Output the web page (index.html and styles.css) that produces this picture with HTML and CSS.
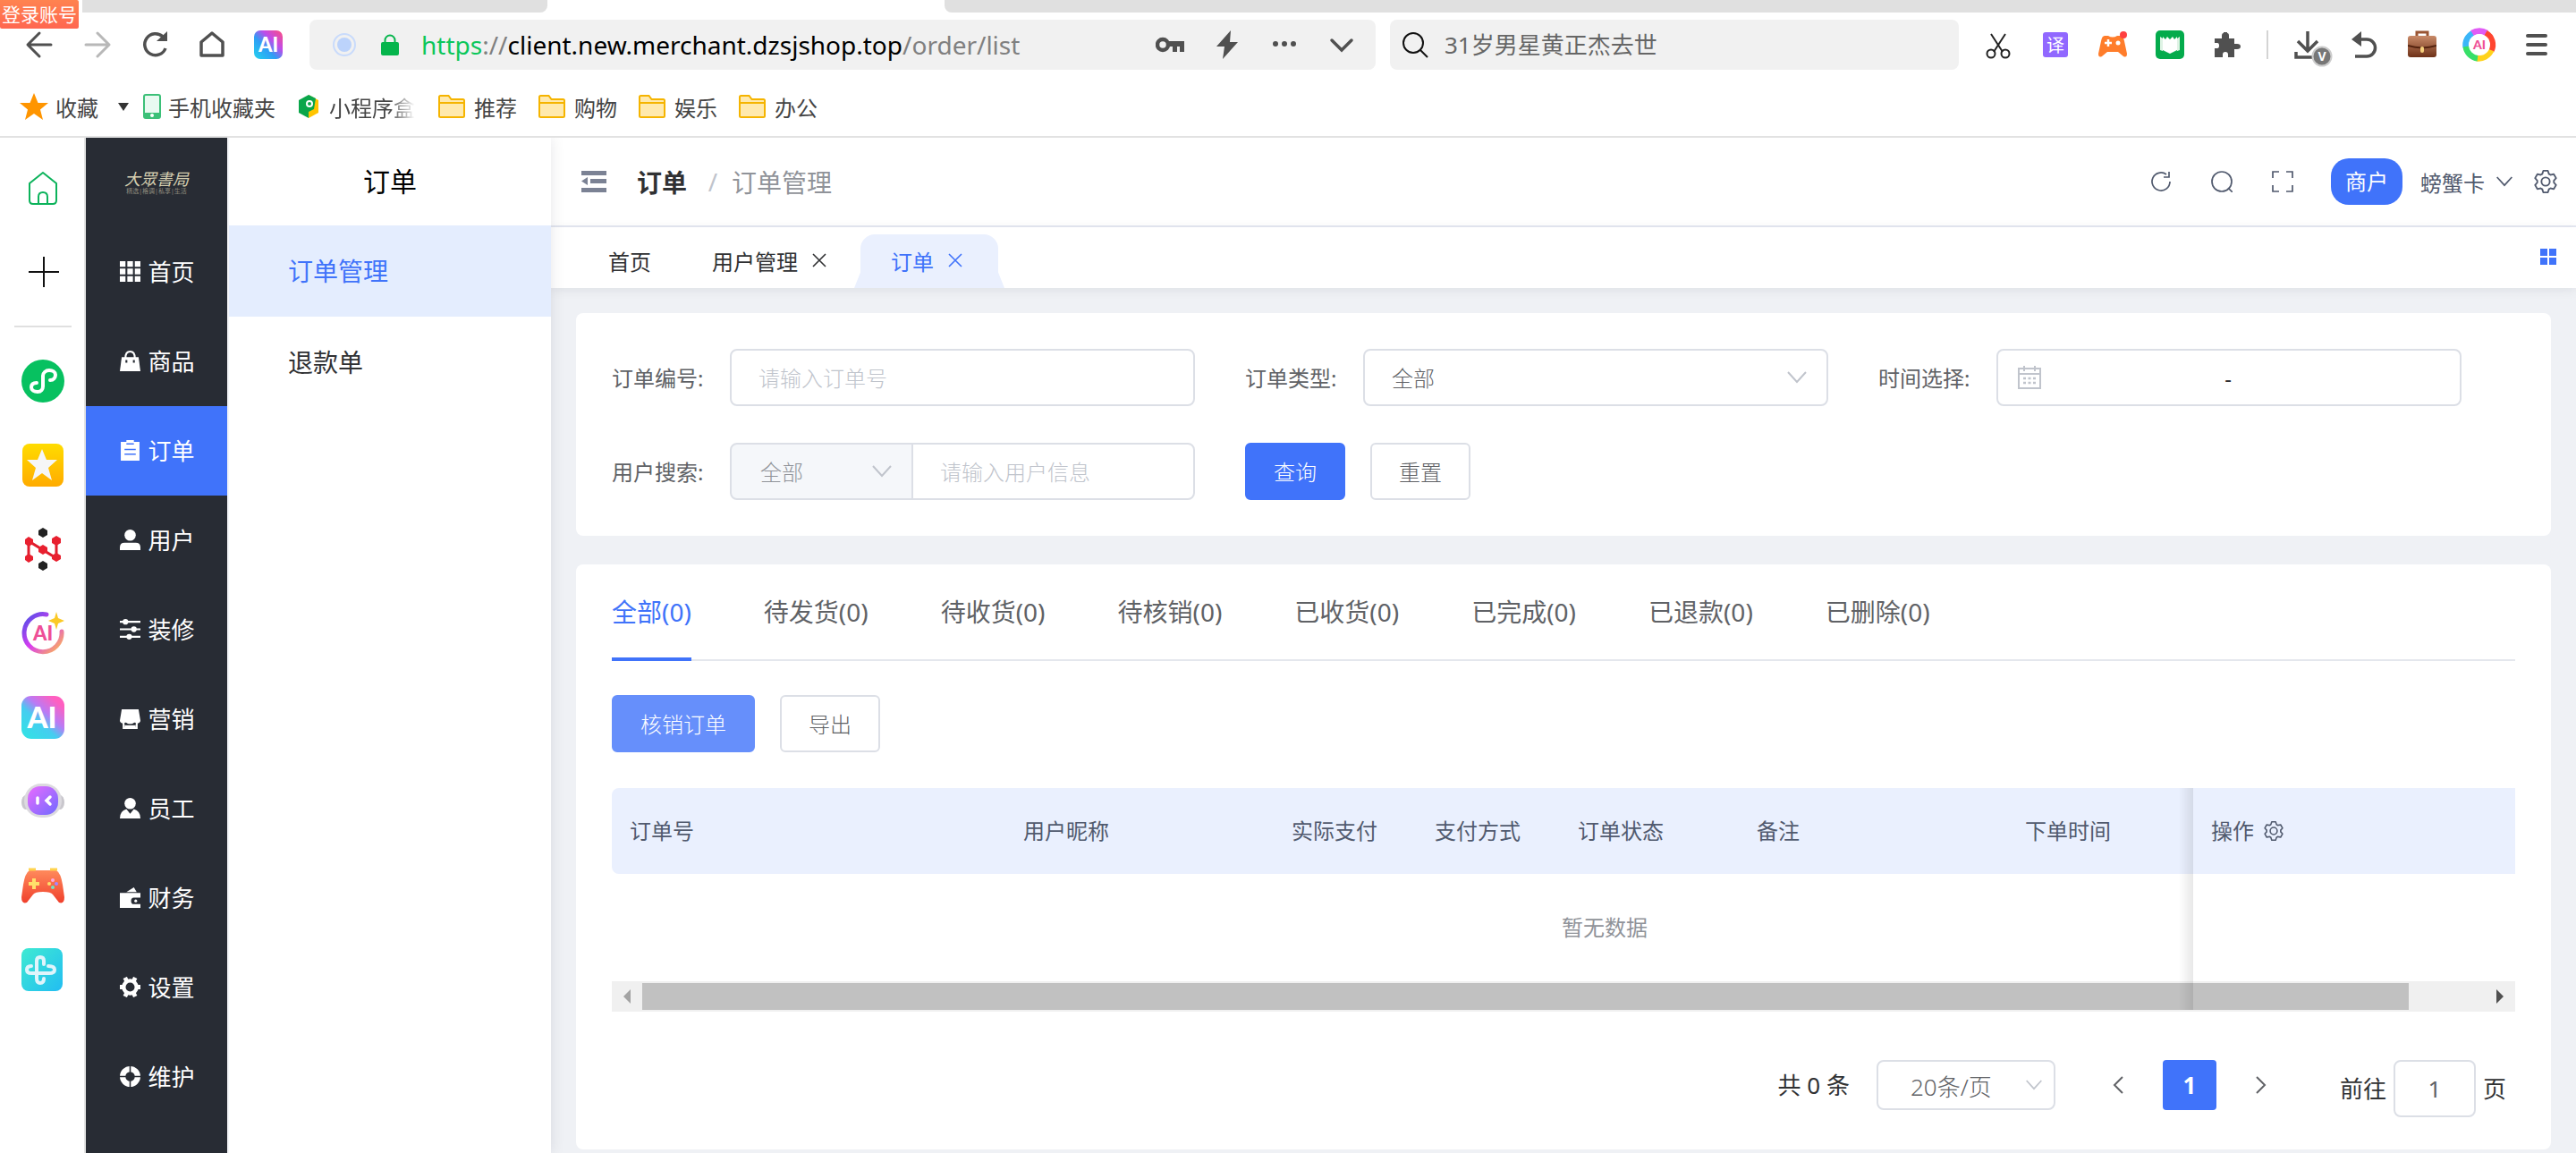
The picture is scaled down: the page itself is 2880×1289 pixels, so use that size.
FILE: index.html
```html
<!DOCTYPE html>
<html lang="zh-CN">
<head>
    <meta charset="UTF-8">
    <meta name="viewport" content="width=device-width, initial-scale=1.0">
    <title>订单管理</title>
    <link rel="stylesheet" href="styles.css">
</head>
<body>
    <!-- Shared icons -->
    <svg class="defs" width="0" height="0" aria-hidden="true">
        <defs>
            <linearGradient id="gAi" x1="0" y1="1" x2="1" y2="0">
                <stop offset="0" stop-color="#23d3ee"/><stop offset=".4" stop-color="#2f9df5"/>
                <stop offset=".65" stop-color="#c04bea"/><stop offset="1" stop-color="#ff4f7d"/>
            </linearGradient>
            <linearGradient id="gTile" x1="0.1" y1=".9" x2=".8" y2=".1">
                <stop offset="0" stop-color="#35dfe6"/><stop offset=".4" stop-color="#45cdf0"/>
                <stop offset=".65" stop-color="#b97bf5"/><stop offset="1" stop-color="#ff5fc0"/>
            </linearGradient>
            <linearGradient id="gStar" x1="0" y1="0" x2="0" y2="1">
                <stop offset="0" stop-color="#ffdc00"/><stop offset="1" stop-color="#ffab00"/>
            </linearGradient>
            <linearGradient id="gRing" x1="0" y1="0" x2="1" y2="1">
                <stop offset="0" stop-color="#4a50e8"/><stop offset=".5" stop-color="#d93cf0"/><stop offset="1" stop-color="#ffc04a"/>
            </linearGradient>
            <linearGradient id="gBot" x1="0" y1="0" x2="1" y2="1">
                <stop offset="0" stop-color="#ea6bff"/><stop offset="1" stop-color="#6f6bff"/>
            </linearGradient>
            <linearGradient id="gPad" x1="0" y1="0" x2="0" y2="1">
                <stop offset="0" stop-color="#ff8a5c"/><stop offset="1" stop-color="#f0402c"/>
            </linearGradient>
            <linearGradient id="gCyan" x1="0" y1="0" x2="1" y2="1">
                <stop offset="0" stop-color="#3fead2"/><stop offset="1" stop-color="#22bdf2"/>
            </linearGradient>
            <linearGradient id="gCase" x1="0" y1="0" x2="0" y2="1">
                <stop offset="0" stop-color="#c98a68"/><stop offset="1" stop-color="#6e3118"/>
            </linearGradient>
            <symbol id="folder" viewBox="0 0 30 26">
                <path d="M1 2.500Q1 1 2.500 1h9l3 4h13Q29 5 29 6.500v17q0 1.500-1.500 1.500h-25Q1 25 1 23.500z" fill="#ffe9ad" stroke="#f5b400" stroke-width="2"/>
                <path d="M1 9h28" stroke="#f5b400" stroke-width="2"/>
            </symbol>
            <symbol id="down" viewBox="0 0 24 24">
                <path d="M2 6l10 11L22 6" fill="none" stroke="currentColor" stroke-width="2"/>
            </symbol>
            <symbol id="close" viewBox="0 0 16 16">
                <path d="M1 1l14 14M15 1L1 15" fill="none" stroke="currentColor" stroke-width="1.600"/>
            </symbol>
            <symbol id="gear" viewBox="64 64 896 896">
                <path fill="currentColor" d="M600.704 64a32 32 0 0 1 30.464 22.208l35.2 109.376c14.784 7.232 28.928 15.36 42.432 24.512l112.384-24.192a32 32 0 0 1 34.432 15.36L944.32 364.8a32 32 0 0 1-4.032 37.504l-77.12 85.12a357.12 357.12 0 0 1 0 49.024l77.12 85.248a32 32 0 0 1 4.032 37.504l-88.704 153.6a32 32 0 0 1-34.432 15.296L708.8 803.904c-13.44 9.088-27.648 17.28-42.368 24.512l-35.264 109.376A32 32 0 0 1 600.704 960H423.296a32 32 0 0 1-30.464-22.208L357.696 828.48a351.616 351.616 0 0 1-42.56-24.64l-112.32 24.256a32 32 0 0 1-34.432-15.36L79.68 659.2a32 32 0 0 1 4.032-37.504l77.12-85.248a357.12 357.12 0 0 1 0-48.896l-77.12-85.248A32 32 0 0 1 79.68 364.8l88.704-153.6a32 32 0 0 1 34.432-15.296l112.32 24.256c13.568-9.152 27.776-17.408 42.56-24.64l35.2-109.312A32 32 0 0 1 423.232 64H600.64zm-23.424 64H446.72l-36.352 113.088-24.512 11.968a294.113 294.113 0 0 0-34.816 20.096l-22.656 15.36-116.224-25.088-65.28 113.152 79.68 88.192-1.92 27.136a293.12 293.12 0 0 0 0 40.192l1.92 27.136-79.808 88.192 65.344 113.152 116.224-25.024 22.656 15.296a294.113 294.113 0 0 0 34.816 20.096l24.512 11.968L446.72 896h130.688l36.48-113.152 24.448-11.904a288.282 288.282 0 0 0 34.752-20.096l22.592-15.296 116.288 25.024 65.28-113.152-79.744-88.192 1.92-27.136a293.12 293.12 0 0 0 0-40.256l-1.92-27.136 79.808-88.128-65.344-113.152-116.288 24.96-22.592-15.232a287.616 287.616 0 0 0-34.752-20.096l-24.448-11.904L577.344 128zM512 320a192 192 0 1 1 0 384 192 192 0 0 1 0-384zm0 64a128 128 0 1 0 0 256 128 128 0 0 0 0-256z"/>
            </symbol>
        </defs>
    </svg>

    <!-- Browser bar -->
    <header class="browser">
        <div class="tabstrip">
            <span class="login-tip">登录账号</span>
            <div class="strip-left"></div>
            <div class="strip-right"></div>
        </div>

        <div class="toolbar">
            <div class="tool-group">
                <svg class="tool" viewBox="0 0 32 32"><path d="M29 16H4M16 3L3 16l13 13" fill="none" stroke="#505050" stroke-width="3" stroke-linecap="round" stroke-linejoin="round"/></svg>
                <svg class="tool" viewBox="0 0 32 32"><path d="M4 16h25M17 3l13 13-13 13" fill="none" stroke="#b8b8b8" stroke-width="3" stroke-linecap="round" stroke-linejoin="round"/></svg>
                <svg class="tool" viewBox="0 0 32 32"><path d="M29 20A12 12 0 1 1 26 7" fill="none" stroke="#505050" stroke-width="3.500"/><path d="M19 12h12V1z" fill="#505050"/></svg>
                <svg class="tool" viewBox="0 0 32 32"><path d="M5 28V13L17 3l12 10v15z" fill="none" stroke="#505050" stroke-width="3.500" stroke-linejoin="round"/></svg>
                <svg class="tool" viewBox="0 0 32 32"><rect width="32" height="32" rx="7" fill="url(#gAi)"/><text x="16" y="24" class="ai-mark" font-size="22">AI</text></svg>
            </div>
            <div class="address">
                <svg class="site" viewBox="0 0 26 26"><circle cx="13" cy="13" r="12" fill="none" stroke="#c9dbfb" stroke-width="2"/><circle cx="13" cy="13" r="8" fill="#bcd3fb"/></svg>
                <svg class="lock" viewBox="0 0 20 24"><path d="M4.500 11V7a5.500 5.500 0 0 1 11 0v4" fill="none" stroke="#05b54c" stroke-width="2"/><rect y="9" width="20" height="15" rx="2" fill="#05b54c"/></svg>
                <div class="url"><span class="scheme">https</span><span class="dim">://</span>client.new.merchant.dzsjshop.top<span class="dim">/order/list</span></div>
                <div class="tool-group">
                    <svg class="tool" viewBox="0 0 32 32"><circle cx="8" cy="16" r="6" fill="none" stroke="#505050" stroke-width="4.500"/><path d="M14 12h18v12h-5v-6h-3v6h-5v-6h-5z" fill="#505050"/></svg>
                    <svg class="tool" viewBox="0 0 32 32"><path d="M20 0L4 18h9l-2 14 17-19h-9z" fill="#505050"/></svg>
                    <svg class="tool" viewBox="0 0 32 32"><g fill="#505050"><circle cx="6" cy="15" r="3"/><circle cx="16" cy="15" r="3"/><circle cx="26" cy="15" r="3"/></g></svg>
                    <svg class="tool" viewBox="0 0 32 32"><path d="M5 11l11 11 11-11" fill="none" stroke="#505050" stroke-width="3.500" stroke-linecap="round"/></svg>
                </div>
            </div>
            <label class="search">
                <svg class="tool" viewBox="0 0 32 32"><circle cx="13" cy="14" r="11" fill="none" stroke="#111" stroke-width="2"/><path d="M21 22l8 8" stroke="#111" stroke-width="2"/></svg>
                <input type="text" class="search-input" placeholder="31岁男星黄正杰去世" aria-label="搜索">
            </label>
            <div class="tool-group">
                <svg class="tool" viewBox="0 0 32 32"><g fill="none" stroke="#222" stroke-width="2"><path d="M8 4l13 20M24 4L11 24"/><circle cx="8" cy="26" r="4.500"/><circle cx="24" cy="26" r="4.500"/></g></svg>
                <svg class="tool" viewBox="0 0 32 32"><rect x="2" y="2" width="28" height="28" rx="3" fill="#9168ff"/><text x="16" y="24" class="glyph" font-size="20">译</text></svg>
                <svg class="tool" viewBox="0 0 32 32"><path d="M7 6h4q5 3 10 0h4q3 0 4 6l3 14q0 5-4 3l-6-5H10l-6 5q-4 2-4-3L3 12q1-6 4-6z" fill="#ff7d2b"/><path d="M11 10v8M7 14h8" stroke="#fff" stroke-width="2.500"/><circle cx="22" cy="14" r="2.500" fill="#fff"/><circle cx="28" cy="5" r="4" fill="#ff4040"/></svg>
                <svg class="tool" viewBox="0 0 32 32"><rect width="32" height="32" rx="5" fill="#04ab4c"/><path d="M5 7l3 2v14l8 3 8-3V9l3-2v15l-11 4-11-4z" fill="#dff3e5"/><path d="M8 7l3 3 2-3 3 3 3-3 2 3 3-3v15l-8 4-8-4z" fill="#fff"/></svg>
                <svg class="tool" viewBox="0 0 32 32"><path d="M2 9h8V6q0-3 2-3V2h4v1q2 0 2 3v3h6v6h3q4 0 4 3t-4 3h-3v9h-7v-3q0-3-3-3t-3 3v3H2V20h3q2 0 2-3t-2-3H2z" fill="#505050"/></svg>
            </div>
            <div class="tool-divider"></div>
            <div class="tool-group">
                <svg class="tool wide-tool" viewBox="0 0 32 32"><path d="M16 1v22M5 12l11 11 11-11M3 24v6h20" fill="none" stroke="#505050" stroke-width="3.500"/><circle cx="32" cy="29" r="10.500" fill="#777" stroke="#ccc" stroke-width="2"/><text x="32" y="34" class="glyph" font-size="14" font-weight="700">V</text></svg>
                <svg class="tool" viewBox="0 0 32 32"><path d="M5 29h13a9 9 0 0 0 0-19H8" fill="none" stroke="#505050" stroke-width="3.500"/><path d="M1 10l11-9v17z" fill="#505050"/></svg>
                <svg class="tool" viewBox="0 0 32 32"><path d="M10 7V2h12v5" fill="none" stroke="#9a5533" stroke-width="3"/><rect y="6" width="32" height="24" rx="3" fill="url(#gCase)"/><path d="M0 17q16 5 32 0" fill="none" stroke="#54230f" stroke-width="2"/><rect x="14" y="18" width="4" height="7" rx="2" fill="#f5cf7b"/></svg>
                <svg class="tool wide-tool" viewBox="0 0 32 32"><g fill="none" stroke-width="7"><path d="M1 19A15 15 0 0 1 9 3" stroke="#3bb6f8"/><path d="M8 3a15 15 0 0 1 16 0" stroke="#e05cf5"/><path d="M23 3a15 15 0 0 1 6 20" stroke="#ff4530"/><path d="M29 22a15 15 0 0 1-16 9" stroke="#ffd21c"/><path d="M14 31A15 15 0 0 1 1 18" stroke="#37df68"/></g><circle cx="16" cy="16" r="12" fill="#fff"/><text x="16" y="21" font-size="14" class="ai-mark pink">AI</text></svg>
                <svg class="tool" viewBox="0 0 32 32"><path d="M6 6h20M6 16h20M6 26h20" stroke="#505050" stroke-width="4" stroke-linecap="round"/></svg>
            </div>
        </div>

        <nav class="bookmarks">
            <a class="bookmark" href="#"><svg width="32" height="32" viewBox="0 0 32 32"><path d="M16 1l4.500 11H32l-9 7.500L26 31l-10-7-10 7 3-11.500L0 12h11.500z" fill="#ff9500"/></svg>收藏</a>
            <span class="caret"></span>
            <a class="bookmark narrow" href="#"><svg width="20" height="28" viewBox="0 0 20 28"><rect x="1" y="1" width="18" height="26" rx="2" fill="#e9faf1" stroke="#3cc078" stroke-width="2"/><path d="M1 21h18v6H1z" fill="#3cc078"/><circle cx="10" cy="24" r="2" fill="#fff"/></svg>手机收藏夹</a>
            <a class="bookmark faded" href="#"><svg width="26" height="28" viewBox="0 0 26 28"><path d="M13 1L2 7v14l11 6z" fill="#0aa64a"/><path d="M13 1l11 6v14l-11 6z" fill="#ffc400"/><path d="M13 1l8 4-2 12-6 3z" fill="#0aa64a"/><circle cx="14" cy="11" r="3" fill="none" stroke="#fff" stroke-width="2"/></svg><span class="fade-text">小程序盒</span></a>
            <a class="bookmark" href="#"><svg width="30" height="26"><use href="#folder"/></svg>推荐</a>
            <a class="bookmark" href="#"><svg width="30" height="26"><use href="#folder"/></svg>购物</a>
            <a class="bookmark" href="#"><svg width="30" height="26"><use href="#folder"/></svg>娱乐</a>
            <a class="bookmark" href="#"><svg width="30" height="26"><use href="#folder"/></svg>办公</a>
        </nav>
    </header>

    <div class="page">
        <!-- Browser side rail -->
        <aside class="rail">
            <svg class="rail-icon" viewBox="0 0 48 48"><path d="M35 42H13q-4 0-4-4V19L24 7l15 12v19q0 4-4 4zM19 42v-8q0-5 5-5t5 5v8" fill="none" stroke="#0cb35b" stroke-width="2" stroke-linejoin="round"/></svg>
            <svg class="rail-icon" viewBox="0 0 48 48"><path d="M25 7v34M8 24h34" stroke="#111" stroke-width="2"/></svg>
            <div class="rail-divider"></div>
            <svg class="rail-icon" viewBox="0 0 48 48"><circle cx="24" cy="24" r="24" fill="#07c160"/><path d="M17 26c-4 0-6 2-6 5s3 5 7 5c4 0 6-3 6-6V18c0-3 3-6 7-6s7 2 7 5-2 6-6 6" fill="none" stroke="#fff" stroke-width="4" stroke-linecap="round"/></svg>
            <svg class="rail-icon" viewBox="0 0 48 48"><rect x="1" width="46" height="48" rx="8" fill="url(#gStar)"/><path d="M23 6l5 12h12l-10 9 4 14-11-8-11 8 4-14-10-9h12z" fill="#f6f6f6"/></svg>
            <svg class="rail-icon" viewBox="0 0 48 48"><path d="M8 34V15l31 19V14" fill="none" stroke="#e01c2c" stroke-width="3"/><g fill="#e8202f"><path d="M8 10l5 3v5l-5 3-4-3v-5zM39 9l5 3v5l-5 3-5-3v-5zM24 19l5 3v5l-5 3-5-3v-5zM8 29l5 3v4l-5 3-4-3v-4zM39 28l5 3v4l-5 3-5-3v-4z"/></g><g fill="#222"><path d="M24 0l5 3v5l-5 3-5-3V3zM24 37l5 3v5l-5 3-5-3v-5z"/></g></svg>
            <svg class="rail-icon" viewBox="0 0 48 48"><path d="M28 3A21 21 0 1 0 45 22" fill="none" stroke="url(#gRing)" stroke-width="5" stroke-linecap="round"/><text x="24" y="32" font-size="22" class="ai-mark pink">AI</text><path d="M39 0l2 7 7 3-7 3-2 7-2-7-7-3 7-3z" fill="#fbc926"/></svg>
            <svg class="rail-icon" viewBox="0 0 48 48"><rect width="48" height="48" rx="11" fill="url(#gTile)"/><text x="23" y="36" font-size="33" class="ai-mark">AI</text></svg>
            <svg class="rail-icon" viewBox="0 0 48 48"><ellipse cx="5" cy="25" rx="5" ry="8" fill="#c9c7cd"/><ellipse cx="43" cy="25" rx="5" ry="8" fill="#c9c7cd"/><rect x="3" y="4" width="42" height="38" rx="19" fill="#dcdadf"/><rect x="7" y="7" width="34" height="32" rx="14" fill="url(#gBot)"/><path d="M18 20v6M32 19l-4 4 4 4" fill="none" stroke="#fff" stroke-width="3.500" stroke-linecap="round"/></svg>
            <svg class="rail-icon" viewBox="0 0 48 48"><path d="M9 7h30q5 3 7 16l2 14q0 8-6 6l-7-9q-2-3-11-3t-11 3l-7 9q-6 2-6-6l2-14Q4 10 9 7z" fill="url(#gPad)"/><path d="M8 6h8M32 6h8" stroke="#ffd34d" stroke-width="3"/><path d="M14 16v12M8 22h12" stroke="#ffe06a" stroke-width="4"/><circle cx="35" cy="18" r="2" fill="#ffa9e0"/><circle cx="31" cy="22" r="2" fill="#ffe06a"/><circle cx="39" cy="22" r="2" fill="#a487ff"/><circle cx="35" cy="26" r="2" fill="#6fe5c4"/></svg>
            <svg class="rail-icon" viewBox="0 0 48 48"><rect width="46" height="48" rx="8" fill="url(#gCyan)"/><path d="M11 20q-5 0-5 4t5 4h20q6 0 6-4t-7-4M25 18v-4q0-4-4-4t-4 4v20q0 5 4 5t4-5" fill="none" stroke="#dff4fb" stroke-width="4" stroke-linecap="round"/></svg>
        </aside>

        <!-- Main menu -->
        <aside class="menu">
            <div class="logo">
                <span class="logo-name">大眾書局</span>
                <span class="logo-sub">精选|格调|私享|生活</span>
            </div>
            <a class="menu-item" href="#"><svg class="menu-icon" viewBox="0 0 22 22"><path d="M0 0h6v6H0zM8 0h6v6H8zM16 0h6v6h-6zM0 8h6v6H0zM8 8h6v6H8zM16 8h6v6h-6zM0 16h6v6H0zM8 16h6v6H8zM16 16h6v6h-6z"/></svg>首页</a>
            <a class="menu-item" href="#"><svg class="menu-icon" viewBox="0 0 22 22"><path d="M2 7h18l2 15H0z"/><path d="M6 8q0-7 5-7t5 7" fill="none" stroke="#fff" stroke-width="2"/><path d="M7 10v3M15 10v3" stroke="#282c34" stroke-width="2"/></svg>商品</a>
            <a class="menu-item active" href="#"><svg class="menu-icon" viewBox="0 0 22 22"><path d="M1 2h6V0h8v2h6v20H1z"/><path d="M7 4h8M5 10h12M5 15h12" stroke="#4073fa" stroke-width="1.500"/></svg>订单</a>
            <a class="menu-item" href="#"><svg class="menu-icon" viewBox="0 0 22 22"><circle cx="11" cy="6" r="6"/><path d="M0 22v-3q0-5 5-5h12q5 0 5 5v3z"/></svg>用户</a>
            <a class="menu-item" href="#"><svg class="menu-icon" viewBox="0 0 22 22"><path d="M0 2h22v2H0zM0 10h22v2H0zM0 18h22v2H0z"/><circle cx="6" cy="3" r="3"/><circle cx="15" cy="11" r="3"/><circle cx="10" cy="19" r="3"/></svg>装修</a>
            <a class="menu-item" href="#"><svg class="menu-icon" viewBox="0 0 22 22"><path d="M2 1h18l2 12q0 3-4 3-2-2-4 0-3 1-6 0-2-2-4 0-4 0-4-3z"/><path d="M4 15v6h14v-6" fill="none" stroke="#fff" stroke-width="2"/><path d="M5 18h12v4H5z"/></svg>营销</a>
            <a class="menu-item" href="#"><svg class="menu-icon" viewBox="0 0 22 22"><circle cx="11" cy="6" r="6"/><path d="M0 22q0-8 7-10l4 5 4-5q7 2 7 10z"/></svg>员工</a>
            <a class="menu-item" href="#"><svg class="menu-icon" viewBox="0 0 22 22"><path d="M0 6h22v5h-7q-3 0-3 3.500t3 3.500h7v4H0zM7 5l8-5 3 5z"/><circle cx="17" cy="14.500" r="1.500"/></svg>财务</a>
            <a class="menu-item" href="#"><svg class="menu-icon" viewBox="0 0 24 24"><circle cx="12" cy="12" r="7.500" fill="none" stroke="#fff" stroke-width="4.500"/><path d="M0 12h4M20 12h4M6 1l2 4M18 1l-2 4M6 23l2-4M18 23l-2-4" stroke="#fff" stroke-width="5"/></svg>设置</a>
            <a class="menu-item" href="#"><svg class="menu-icon" viewBox="0 0 22 22"><circle cx="11" cy="11" r="8" fill="none" stroke="#fff" stroke-width="6"/><path d="M11 0v22M0 11h22" stroke="#282c34" stroke-width="1.500"/></svg>维护</a>
        </aside>

        <!-- Sub menu -->
        <aside class="submenu">
            <h2 class="submenu-title">订单</h2>
            <a class="submenu-item active" href="#">订单管理</a>
            <a class="submenu-item" href="#">退款单</a>
        </aside>

        <main class="main">
            <div class="topbar">
                <svg class="fold" viewBox="0 0 28 24"><path d="M0 0h28v5H0zM10 9h18v5H10zM0 19h28v5H0zM7 7v9l-7-4.500z"/></svg>
                <b class="crumb-root">订单</b>
                <span class="crumb-sep">/</span>
                <span class="crumb">订单管理</span>
                <div class="top-actions">
                    <svg viewBox="0 0 24 24"><path d="M22 12A10 10 0 1 1 18 4M21 1v6h-6" fill="none" stroke="currentColor" stroke-width="1.700"/></svg>
                    <svg viewBox="0 0 24 24"><circle cx="12" cy="12" r="11" fill="none" stroke="currentColor" stroke-width="1.700"/><path d="M19 19l5 5" stroke="currentColor" stroke-width="1.700"/></svg>
                    <svg viewBox="0 0 24 24"><path d="M1 8V1h7M16 1h7v7M23 16v7h-7M8 23H1v-7" fill="none" stroke="currentColor" stroke-width="1.700"/></svg>
                </div>
                <span class="role">商户</span>
                <button class="user" type="button">螃蟹卡<svg width="20" height="20"><use href="#down"/></svg></button>
                <svg class="top-gear"><use href="#gear"/></svg>
            </div>

            <div class="tabs-bar">
                <a class="tab" href="#">首页</a>
                <a class="tab" href="#">用户管理<svg width="16" height="16"><use href="#close"/></svg></a>
                <a class="tab active" href="#">订单<svg width="16" height="16"><use href="#close"/></svg></a>
                <svg class="tab-menu" viewBox="0 0 18 18"><path d="M0 0h8v8H0zM10 0h8v8h-8zM0 10h8v8H0zM10 10h8v8h-8z"/></svg>
            </div>

            <div class="content">
                <!-- Filters -->
                <form class="card filters">
                    <div class="field">
                        <label for="orderNo">订单编号:</label>
                        <input id="orderNo" class="box" type="text" placeholder="请输入订单号">
                    </div>
                    <div class="field">
                        <label for="orderType">订单类型:</label>
                        <div class="select">
                            <select id="orderType" class="box"><option>全部</option></select>
                            <svg class="arrow"><use href="#down"/></svg>
                        </div>
                    </div>
                    <div class="field">
                        <label for="dateStart">时间选择:</label>
                        <div class="box range">
                            <svg width="26" height="26" viewBox="0 0 26 26"><path d="M1 3h24v22H1zM1 9h24M7 0v6M19 0v6" fill="none" stroke="#c0c4cc" stroke-width="2"/><path d="M6 14h14M6 19h14" stroke="#c0c4cc" stroke-width="2.500" stroke-dasharray="3 2.500"/></svg>
                            <input id="dateStart" type="text">
                            <span>-</span>
                            <input type="text" aria-label="结束时间">
                        </div>
                    </div>
                    <div class="field">
                        <label for="userSearch">用户搜索:</label>
                        <div class="group">
                            <div class="select">
                                <select class="box" aria-label="搜索类型"><option>全部</option></select>
                                <svg class="arrow"><use href="#down"/></svg>
                            </div>
                            <input id="userSearch" class="box" type="text" placeholder="请输入用户信息">
                        </div>
                    </div>
                    <div class="buttons">
                        <button class="btn primary" type="button">查询</button>
                        <button class="btn" type="button">重置</button>
                    </div>
                </form>

                <!-- Order list -->
                <section class="card">
                    <nav class="status">
                        <a class="active" href="#">全部(0)</a>
                        <a href="#">待发货(0)</a>
                        <a href="#">待收货(0)</a>
                        <a href="#">待核销(0)</a>
                        <a href="#">已收货(0)</a>
                        <a href="#">已完成(0)</a>
                        <a href="#">已退款(0)</a>
                        <a href="#">已删除(0)</a>
                    </nav>
                    <div class="buttons actions">
                        <button class="btn primary light" type="button">核销订单</button>
                        <button class="btn" type="button">导出</button>
                    </div>
                    <div class="table-box">
                        <div class="table-wrap">
                            <table class="table">
                                <colgroup>
                                    <col class="w-no"><col class="w-wide"><col class="w-slim"><col class="w-slim">
                                    <col class="w-state"><col class="w-wide"><col class="w-wide"><col class="w-op">
                                </colgroup>
                                <thead>
                                    <tr>
                                        <th>订单号</th>
                                        <th>用户昵称</th>
                                        <th>实际支付</th>
                                        <th>支付方式</th>
                                        <th>订单状态</th>
                                        <th>备注</th>
                                        <th>下单时间</th>
                                        <th class="fixed">操作<svg class="th-gear"><use href="#gear"/></svg></th>
                                    </tr>
                                </thead>
                                <tbody>
                                    <tr><td colspan="8">暂无数据</td></tr>
                                </tbody>
                            </table>
                        </div>
                        <div class="scrollbar">
                            <svg class="scroll-end" viewBox="0 0 34 30"><path d="M13 15l8-8v16z" fill="#a3a3a3"/></svg>
                            <div class="track"><div class="thumb"></div></div>
                            <svg class="scroll-end" viewBox="0 0 34 30"><path d="M21 15l-8-8v16z" fill="#505050"/></svg>
                        </div>
                        <div class="fixed-shadow"></div>
                    </div>

                    <div class="pager">
                        <span class="total">共 0 条</span>
                        <div class="select size">
                            <select class="box" aria-label="每页条数"><option>20条/页</option></select>
                            <svg class="arrow"><use href="#down"/></svg>
                        </div>
                        <div class="pages">
                            <button type="button" aria-label="上一页"><svg width="12" height="20" viewBox="0 0 12 20"><path d="M11 1L2 10l9 9" fill="none" stroke="#606266" stroke-width="2"/></svg></button>
                            <button class="current" type="button">1</button>
                            <button type="button" aria-label="下一页"><svg width="12" height="20" viewBox="0 0 12 20"><path d="M1 1l9 9-9 9" fill="none" stroke="#606266" stroke-width="2"/></svg></button>
                        </div>
                        <label class="jump">前往<input class="box" type="text" value="1">页</label>
                    </div>
                </section>
            </div>
        </main>
    </div>
</body>
</html>
```

FILE: styles.css
```css
:root {
    --primary-color: #4073fa;
    --border-color: #dcdfe6;
    --text-color: #606266;
    --head-bg: #eaf0fe;
    --dark: #282c34;
}

* {
    box-sizing: border-box;
    margin: 0;
    padding: 0;
}

body {
    font-family: "Noto Sans", "Noto Sans CJK SC", sans-serif;
    font-size: 24px;
    color: #303133;
    background: #fff;
    min-height: 100vh;
    display: flex;
    flex-direction: column;
}

input, select, button {
    font: inherit;
    color: inherit;
}

a {
    color: inherit;
    text-decoration: none;
}

svg {
    flex: none;
    display: block;
}

.defs {
    position: absolute;
}

/* Browser bar */
.browser {
    border-bottom: 2px solid #e2e2e2;
}

.tabstrip {
    position: relative;
    display: flex;
    justify-content: space-between;
    height: 14px;
    padding-left: 92px;
}

.strip-left {
    width: 520px;
    background: #e0e0e0;
    border-bottom-right-radius: 8px;
}

.strip-right {
    width: 1824px;
    background: #e0e0e0;
    border-bottom-left-radius: 8px;
}

.login-tip {
    position: absolute;
    top: 0;
    left: 0;
    width: 88px;
    font-size: 21px;
    line-height: 32px;
    text-align: center;
    color: #fff;
    background: linear-gradient(#ff8350, #ff6650);
    border-radius: 0 2px 2px 2px;
}

.toolbar {
    display: flex;
    align-items: center;
    height: 72px;
    padding: 0 28px;
}

.tool-group {
    display: flex;
    gap: 32px;
}

.tool {
    width: 32px;
    height: 32px;
}

.wide-tool {
    overflow: visible;
}

.tool-divider {
    width: 2px;
    height: 32px;
    margin: 0 28px;
    background: #d4d4d4;
}

.ai-mark {
    font-family: Lato, sans-serif;
    font-weight: 900;
    fill: #fff;
    text-anchor: middle;
}

.pink {
    fill: #ee4f96;
}

.glyph {
    fill: #fff;
    text-anchor: middle;
}

.address {
    flex: 1;
    display: flex;
    align-items: center;
    height: 56px;
    margin: 0 16px 0 30px;
    padding: 0 22px 0 26px;
    background: #f1f1f1;
    border-radius: 8px;
}

.site {
    width: 26px;
    height: 26px;
}

.lock {
    width: 20px;
    height: 24px;
    margin: 0 25px 0 28px;
}

.url {
    flex: 1;
    font-size: 28px;
    color: #000;
}

.scheme {
    color: #0cc75b;
}

.dim {
    color: #808080;
}

.search {
    display: flex;
    align-items: center;
    gap: 16px;
    width: 636px;
    height: 56px;
    margin-right: 28px;
    padding: 0 13px;
    background: #f1f1f1;
    border-radius: 8px;
}

.search-input {
    flex: 1;
    font-size: 26px;
    border: none;
    background: none;
}

.search-input::placeholder {
    color: #666;
}

.bookmarks {
    display: flex;
    align-items: center;
    height: 66px;
    padding: 0 22px;
    color: #444;
}

.bookmark {
    display: flex;
    align-items: center;
    gap: 10px;
    margin-right: 24px;
}

.bookmark:first-child {
    gap: 8px;
    margin-right: 22px;
}

.bookmark.narrow {
    gap: 8px;
}

.bookmark.faded {
    margin-right: 26px;
}

.fade-text {
    background: linear-gradient(to right, #444 70%, #fff);
    background-clip: text;
    color: transparent;
}

.caret {
    margin-right: 16px;
    border: 6px solid transparent;
    border-top: 9px solid #333;
    border-bottom: none;
}

/* Side rail */
.page {
    flex: 1;
    display: flex;
}

.rail {
    flex: none;
    width: 96px;
    padding: 32px 22px 0 24px;
    border-right: 2px solid #e2e2e2;
    display: flex;
    flex-direction: column;
    gap: 46px;
}

.rail-icon {
    width: 48px;
    height: 48px;
}

.rail-divider {
    height: 2px;
    margin: -10px -8px;
    background: #e0e0e0;
}

/* Main menu */
.menu {
    flex: none;
    width: 158px;
    background: var(--dark);
    color: #fff;
}

.logo {
    height: 100px;
    display: flex;
    flex-direction: column;
    align-items: center;
    justify-content: center;
    color: #d5cfb0;
}

.logo-name {
    font-size: 18px;
    line-height: 20px;
    font-style: italic;
}

.logo-sub {
    font-size: 7px;
    line-height: 8px;
    color: #8e8b7d;
}

.menu-item {
    display: flex;
    align-items: center;
    justify-content: center;
    gap: 8px;
    height: 100px;
    padding: 0 0 2px 2px;
    font-size: 26px;
}

.menu-item.active {
    background: var(--primary-color);
}

.menu-icon {
    width: 23px;
    height: 23px;
    fill: #fff;
}

/* Sub menu */
.submenu {
    flex: none;
    position: relative;
    width: 362px;
    background: #fff;
    box-shadow: 0 0 16px rgba(0, 21, 41, 0.1);
    clip-path: inset(0 -20px 0 0);
    border-left: 2px solid #f4f5f8;
}

.submenu-title {
    font-size: 30px;
    font-weight: 400;
    line-height: 98px;
    text-align: center;
    color: #000;
}

.submenu-item {
    display: block;
    padding-left: 66px;
    font-size: 28px;
    line-height: 102px;
}

.submenu-item.active {
    color: var(--primary-color);
    background: #e4edfe;
}

/* Top bar */
.main {
    flex: 1;
    min-width: 0;
    display: flex;
    flex-direction: column;
    background: #eff1f5;
}

.topbar {
    display: flex;
    align-items: center;
    height: 100px;
    padding: 0 21px 0 34px;
    background: #fff;
    border-bottom: 2px solid #e6e9f3;
    font-size: 28px;
    color: #515a6e;
}

.fold {
    width: 28px;
    height: 24px;
    margin-right: 34px;
    fill: #7b8294;
}

.crumb-root {
    color: #303133;
}

.crumb-sep {
    width: 50px;
    text-align: center;
    padding-left: 8px;
    color: #c0c4cc;
}

.crumb {
    color: #909399;
}

.top-actions {
    display: flex;
    gap: 44px;
    margin-left: auto;
}

.top-actions svg {
    width: 24px;
    height: 24px;
}

.role {
    width: 80px;
    margin: 0 20px 0 42px;
    font-size: 24px;
    line-height: 52px;
    text-align: center;
    color: #fff;
    background: var(--primary-color);
    border-radius: 20px;
}

.user {
    display: flex;
    align-items: center;
    gap: 12px;
    margin-right: 23px;
    font-size: 24px;
    border: none;
    background: none;
}

.top-gear {
    width: 26px;
    height: 26px;
}

/* Page tabs */
.tabs-bar {
    display: flex;
    align-items: flex-end;
    height: 68px;
    padding: 0 22px 0 30px;
    background: #fff;
    box-shadow: 0 2px 12px rgba(0, 21, 41, 0.08);
}

.tab {
    display: flex;
    align-items: center;
    gap: 16px;
    height: 60px;
    padding: 0 34px 2px;
}

.tab.active {
    position: relative;
    margin-left: 4px;
    padding-right: 40px;
    color: var(--primary-color);
    background: var(--head-bg);
    border-radius: 16px 16px 0 0;
}

.tab.active::before,
.tab.active::after {
    content: "";
    position: absolute;
    bottom: 0;
    width: 8px;
    height: 20px;
    background: var(--head-bg);
}

.tab.active::before {
    left: -7px;
    clip-path: polygon(100% 0, 100% 100%, 0 100%);
}

.tab.active::after {
    right: -7px;
    clip-path: polygon(0 0, 100% 100%, 0 100%);
}

.tab-menu {
    width: 18px;
    height: 18px;
    margin: 0 0 26px auto;
    fill: var(--primary-color);
}

/* Cards */
.content {
    padding: 28px 28px 4px;
}

.card {
    padding: 0 40px;
    background: #fff;
    border-radius: 8px;
}

.filters {
    display: grid;
    grid-template-columns: repeat(3, minmax(0, 652px));
    gap: 41px 56px;
    padding: 40px;
    margin-bottom: 32px;
}

.field {
    display: flex;
    align-items: center;
    color: var(--text-color);
}

.field label {
    flex: none;
    width: 132px;
    padding-bottom: 2px;
}

.box {
    width: 100%;
    min-width: 0;
    height: 64px;
    padding: 0 30px;
    color: var(--text-color);
    background: #fff;
    border: 2px solid var(--border-color);
    border-radius: 8px;
    font-weight: 300;
}

.box::placeholder {
    color: #c0c4cc;
}

.select {
    position: relative;
    flex: 1;
}

.select select {
    display: block;
    appearance: none;
}

.arrow {
    position: absolute;
    top: 50%;
    right: 23px;
    width: 24px;
    height: 24px;
    margin-top: -12px;
    color: #c0c4cc;
    pointer-events: none;
}

.range {
    display: flex;
    align-items: center;
    padding: 0 50px 0 22px;
    color: #303133;
    font-weight: 400;
}

.range input {
    flex: 1;
    min-width: 0;
    border: none;
    background: none;
}

.group {
    flex: 1;
    display: flex;
}

.group .select {
    flex: none;
    width: 205px;
    margin-right: -2px;
}

.group select {
    color: #909399;
    background: #f5f7fa;
    border-radius: 8px 0 0 8px;
    padding: 0 32px;
}

.group input {
    border-radius: 0 8px 8px 0;
}

.buttons {
    display: flex;
    gap: 28px;
}

.btn {
    height: 64px;
    padding: 0 30px 2px;
    color: var(--text-color);
    background: #fff;
    border: 2px solid var(--border-color);
    border-radius: 6px;
    font-weight: 300;
}

.btn.primary {
    color: #fff;
    background: var(--primary-color);
    border-color: var(--primary-color);
}

.btn.light {
    background: #668ffb;
    border-color: #668ffb;
}

/* Order list */
.status {
    display: flex;
    gap: 81px;
    border-bottom: 2px solid #e4e7ed;
    font-size: 28px;
    line-height: 106px;
    color: var(--text-color);
}

.status .active {
    position: relative;
    color: var(--primary-color);
}

.status .active::after {
    content: "";
    position: absolute;
    left: 0;
    bottom: -2px;
    width: 100%;
    height: 4px;
    background: var(--primary-color);
}

.actions {
    margin: 38px 0 40px;
}

.table-box {
    position: relative;
}

.table-wrap {
    overflow: hidden;
}

.table {
    width: 2220px;
    table-layout: fixed;
    border-collapse: separate;
    border-spacing: 0;
}

.w-no { width: 440px; }
.w-wide { width: 300px; }
.w-slim { width: 160px; }
.w-state { width: 200px; }
.w-op { width: 360px; }

.table th {
    height: 96px;
    padding: 0 20px 4px;
    font-weight: 400;
    text-align: left;
    color: #515a6e;
    background: var(--head-bg);
}

.table th:first-child {
    border-radius: 8px 0 0 8px;
}

.table .fixed {
    position: sticky;
    right: 0;
}

.th-gear {
    display: inline-block;
    width: 22px;
    height: 22px;
    margin-left: 11px;
    vertical-align: -2px;
}

.table td {
    height: 120px;
    padding-bottom: 4px;
    text-align: center;
    color: #909399;
}

.scrollbar {
    display: flex;
    padding: 2px 0;
    background: #f0f0f0;
}

.scroll-end {
    width: 34px;
    height: 30px;
}

.track {
    flex: 1;
}

.thumb {
    width: 95.86%;
    height: 30px;
    background: #c1c1c1;
}

.fixed-shadow {
    position: absolute;
    top: 0;
    right: 360px;
    bottom: 2px;
    width: 16px;
    background: linear-gradient(to left, rgba(0, 0, 0, 0.09), transparent);
}

/* Pagination */
.pager {
    display: flex;
    justify-content: flex-end;
    align-items: flex-start;
    padding: 54px 10px 36px 0;
    font-size: 26px;
    line-height: 56px;
}

.size {
    flex: none;
    width: 200px;
    margin: 0 40px 0 30px;
}

.size .box {
    height: 56px;
    padding: 0 36px;
}

.size .arrow {
    right: 14px;
    width: 20px;
    height: 20px;
    margin-top: -10px;
}

.pages {
    display: flex;
    gap: 20px;
}

.pages button {
    display: flex;
    align-items: center;
    justify-content: center;
    width: 60px;
    height: 56px;
    border: none;
    border-radius: 4px;
    background: #fff;
}

.pages .current {
    color: #fff;
    background: var(--primary-color);
    font-weight: 700;
}

.jump {
    display: flex;
    align-items: center;
    gap: 8px;
    margin-left: 58px;
}

.jump .box {
    width: 92px;
    padding: 0;
    text-align: center;
    font-weight: 400;
}
```
